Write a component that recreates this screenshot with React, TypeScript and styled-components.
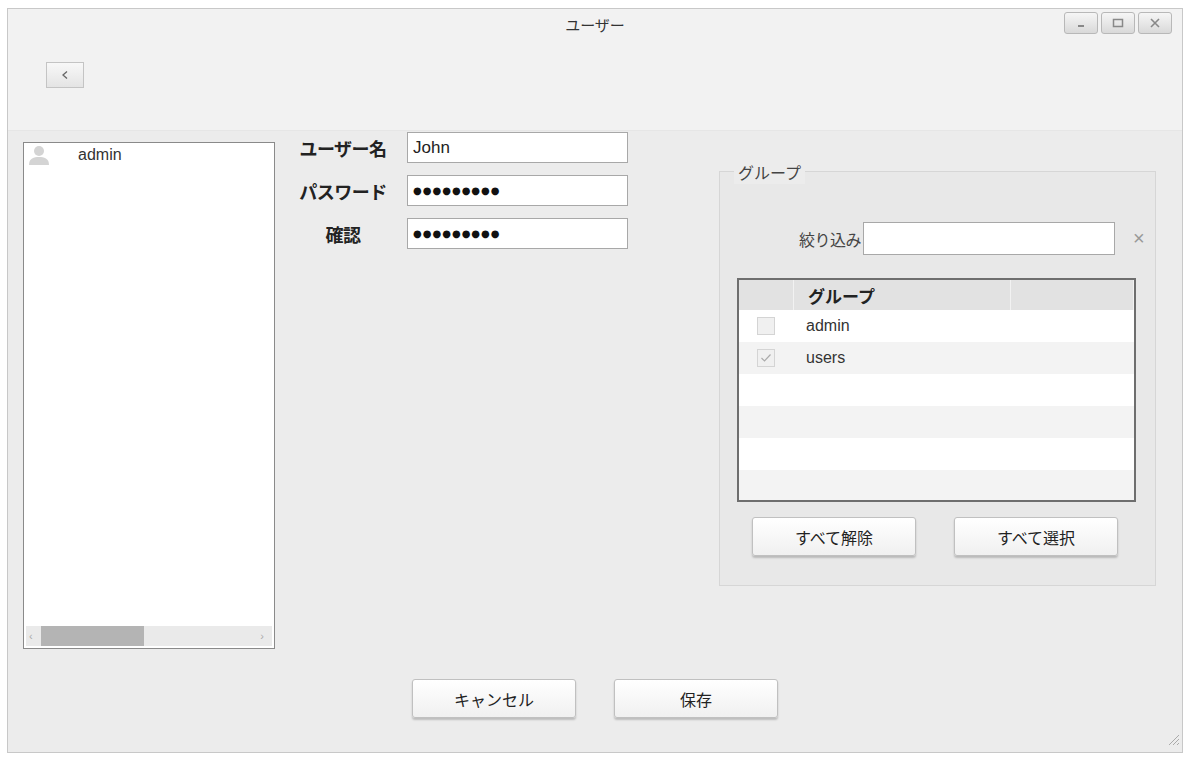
import React from "react";
import styled, { createGlobalStyle } from "styled-components";

const Global = createGlobalStyle`
  html, body { margin: 0; padding: 0; background: #fff; }
  body { font-family: "Liberation Sans", "Noto Sans CJK JP", sans-serif; color: #222; }
`;

const Win = styled.div`
  margin: 8px 0 0 7px;
  width: 1174px;
  height: 743px;
  border: 1px solid #c8c8c8;
  background: #ececec;
  display: flex;
  flex-direction: column;
  position: relative;
`;
const Header = styled.div`
  height: 121px;
  background: #f2f2f2;
  border-bottom: 1px solid #e6e6e6;
  display: flex;
  flex-direction: column;
`;
const TitleBar = styled.div`
  height: 30px;
  display: flex;
  align-items: center;
  justify-content: center;
  position: relative;
  font-family: "Noto Sans CJK JP", sans-serif;
  font-size: 15px;
  color: #333;
`;
const WinBtns = styled.div`
  position: absolute;
  right: 10px;
  top: 3px;
  display: flex;
  gap: 3px;
`;
const WinBtn = styled.div`
  width: 34px;
  height: 22px;
  border: 1px solid #b8b8b8;
  border-radius: 3px;
  background: linear-gradient(#f6f6f6, #d9d9d9);
  display: flex;
  align-items: center;
  justify-content: center;
  box-sizing: border-box;
`;
const BackBtn = styled.div`
  margin: 23px 0 0 38px;
  width: 38px;
  height: 26px;
  box-sizing: border-box;
  border: 1px solid #c4c4c4;
  background: linear-gradient(#f8f8f8, #e4e4e4);
  display: flex;
  align-items: center;
  justify-content: center;
`;
const Main = styled.div`
  display: flex;
  align-items: flex-start;
`;
const UserList = styled.div`
  margin: 11px 0 0 15px;
  width: 252px;
  height: 507px;
  box-sizing: border-box;
  border: 1px solid #8a8a8a;
  background: #fff;
  display: flex;
  flex-direction: column;
`;
const UserItem = styled.div`
  display: flex;
  align-items: center;
  gap: 28px;
  padding: 2px 4px;
  font-size: 16px;
  color: #333;
`;
const ListSpace = styled.div`flex: 1;`;
const HScroll = styled.div`
  height: 20px;
  margin: 0 2px 2px;
  background: #eaeaea;
  display: flex;
  align-items: center;
  font-size: 11px;
  color: #aaa;
`;
const Thumb = styled.div`
  width: 103px;
  height: 20px;
  background: #b4b4b4;
  margin: 0 auto 0 8px;
`;
const Form = styled.div`
  margin: 1px 0 0 14px;
  display: flex;
  flex-direction: column;
  gap: 12px;
`;
const Row = styled.div`
  display: flex;
  align-items: center;
  gap: 6px;
`;
const Label = styled.div`
  width: 116px;
  margin-left: -4px;
  text-align: center;
  font-family: "Noto Sans CJK JP", sans-serif;
  font-weight: 700;
  font-size: 18px;
  letter-spacing: -0.5px;
  color: #222;
`;
const Input = styled.div<{ $w?: number }>`
  width: ${p => p.$w ?? 221}px;
  height: 31px;
  box-sizing: border-box;
  border: 1px solid #a8a8a8;
  background: #fff;
  display: flex;
  align-items: center;
  padding: 0 5px;
  font-size: 17px;
  color: #222;
`;
const Dots = styled.span`
  font-size: 10px;
  letter-spacing: 1px;
  font-family: "DejaVu Sans", sans-serif;
  color: #111;
`;
const Group = styled.div`
  margin: 40px 26px 0 auto;
  width: 437px;
  height: 415px;
  box-sizing: border-box;
  border: 1px solid #d6d6d6;
  background: #e8e8e8;
  position: relative;
  display: flex;
  flex-direction: column;
  padding: 50px 0 0 17px;
`;
const Legend = styled.div`
  position: absolute;
  top: -12px;
  left: 14px;
  padding: 0 4px;
  background: #ececec;
  font-family: "Noto Sans CJK JP", sans-serif;
  font-size: 16px;
  color: #444;
`;
const FilterRow = styled.div`
  display: flex;
  align-items: center;
  margin-left: 45px;
  gap: 2px;
`;
const SmallLabel = styled.div`
  font-family: "Noto Sans CJK JP", sans-serif;
  font-size: 16px;
  letter-spacing: -0.5px;
  color: #444;
`;
const Clear = styled.div`
  margin-left: 16px;
  font-size: 20px;
  color: #999;
`;
const Table = styled.div`
  margin-top: 23px;
  width: 399px;
  height: 224px;
  box-sizing: border-box;
  border: 2px solid #6e6e6e;
  background: #fff;
  display: flex;
  flex-direction: column;
  overflow: hidden;
`;
const THead = styled.div`
  height: 30px;
  flex: none;
  display: grid;
  grid-template-columns: 55px 217px 1fr;
  background: #e2e2e2;
`;
const TH = styled.div`
  display: flex;
  align-items: center;
  padding-left: 14px;
  border-right: 1px solid #f2f2f2;
  font-family: "Noto Sans CJK JP", sans-serif;
  font-weight: 700;
  font-size: 17px;
`;
const TRow = styled.div<{ $alt: boolean }>`
  height: 32px;
  flex: none;
  display: grid;
  grid-template-columns: 67px 1fr;
  align-items: center;
  background: ${p => (p.$alt ? "#f3f3f3" : "#fff")};
  font-size: 16px;
  color: #333;
`;
const Check = styled.div`
  margin-left: 18px;
  width: 18px;
  height: 18px;
  box-sizing: border-box;
  border: 1px solid #d4d4d4;
  background: #f0f0f0;
  display: flex;
  align-items: center;
  justify-content: center;
`;
const BtnRow = styled.div<{ $gap: number; $center?: boolean }>`
  display: flex;
  gap: ${p => p.$gap}px;
  justify-content: ${p => (p.$center ? "center" : "flex-start")};
`;
const Button = styled.div`
  width: 164px;
  height: 39px;
  box-sizing: border-box;
  border: 1px solid #c0c0c0;
  border-radius: 3px;
  background: linear-gradient(#ffffff, #f0f0f0);
  box-shadow: 0 2px 2px rgba(0,0,0,0.2);
  display: flex;
  align-items: center;
  justify-content: center;
  font-family: "Noto Sans CJK JP", sans-serif;
  font-size: 16px;
  color: #222;
`;
const Footer = styled.div`
  margin-top: 30px;
`;
const Grip = styled.div`
  position: absolute;
  right: 2px;
  bottom: 2px;
`;

export default function App() {
  return (
    <>
      <Global />
      <Win>
        <Header>
          <TitleBar>
            ユーザー
            <WinBtns>
              <WinBtn><svg width="10" height="10"><rect x="2" y="7" width="6" height="2" fill="#888" /></svg></WinBtn>
              <WinBtn><svg width="12" height="10"><rect x="1.5" y="1.5" width="9" height="7" fill="none" stroke="#888" strokeWidth="1.5" /></svg></WinBtn>
              <WinBtn><svg width="12" height="12"><path d="M2 2L10 10M10 2L2 10" stroke="#888" strokeWidth="1.6" /></svg></WinBtn>
            </WinBtns>
          </TitleBar>
          <BackBtn><svg width="10" height="10"><path d="M7 1.5L3 5L7 8.5" fill="none" stroke="#666" strokeWidth="1.3" /></svg></BackBtn>
        </Header>
        <Main>
          <UserList>
            <UserItem>
              <svg width="22" height="20" viewBox="0 0 22 20">
                <circle cx="11" cy="6" r="5" fill="#d4d4d4" />
                <path d="M1 20C1 13 6 12 11 12C16 12 21 13 21 20Z" fill="#d4d4d4" />
              </svg>
              admin
            </UserItem>
            <ListSpace />
            <HScroll><span style={{ marginLeft: 3 }}>‹</span><Thumb /><span style={{ marginRight: 8 }}>›</span></HScroll>
          </UserList>
          <Form>
            <Row><Label>ユーザー名</Label><Input>John</Input></Row>
            <Row><Label>パスワード</Label><Input><Dots>●●●●●●●●●</Dots></Input></Row>
            <Row><Label>確認</Label><Input><Dots>●●●●●●●●●</Dots></Input></Row>
          </Form>
          <Group>
            <Legend>グループ</Legend>
            <FilterRow style={{ marginLeft: 62 }}>
              <SmallLabel>絞り込み</SmallLabel>
              <Input $w={252} style={{ height: 33 }} />
              <Clear>×</Clear>
            </FilterRow>
            <Table>
              <THead><TH /><TH>グループ</TH><TH /></THead>
              <TRow $alt={false}><Check /><span>admin</span></TRow>
              <TRow $alt={true}>
                <Check><svg width="12" height="10"><path d="M1.5 5L4.5 8L10.5 1.5" fill="none" stroke="#aaa" strokeWidth="1.2" /></svg></Check>
                <span>users</span>
              </TRow>
              <TRow $alt={false} />
              <TRow $alt={true} />
              <TRow $alt={false} />
              <TRow $alt={true} />
            </Table>
            <BtnRow $gap={38} style={{ marginTop: 15, marginLeft: 15 }}>
              <Button>すべて解除</Button>
              <Button>すべて選択</Button>
            </BtnRow>
          </Group>
        </Main>
        <Footer>
          <BtnRow $gap={38} $center>
            <Button>キャンセル</Button>
            <Button>保存</Button>
          </BtnRow>
        </Footer>
        <Grip>
          <svg width="14" height="14"><path d="M13 3L3 13M13 7L7 13M13 11L11 13" stroke="#aaa" strokeWidth="1" /></svg>
        </Grip>
      </Win>
    </>
  );
}
